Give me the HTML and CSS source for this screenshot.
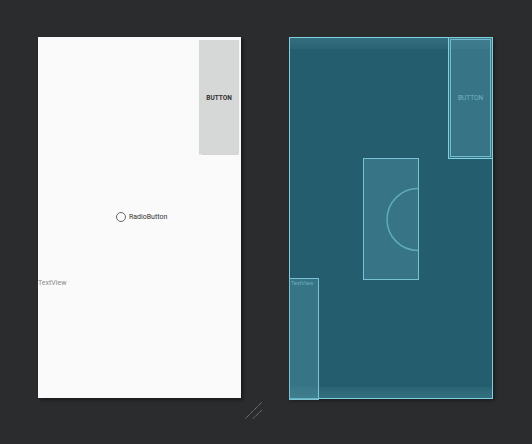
FILE: index.html
```html
<!DOCTYPE html>
<html>

<head>
    <meta charset="UTF-8" />
    <title>Layout Editor</title>
    <link rel="stylesheet" href="styles.css">
</head>

<body>
    <div class="stage">
        <!-- design surface -->
        <div class="screen design">
            <div class="btn">BUTTON</div>
            <div class="radio"><span class="dot"></span>RadioButton</div>
            <div class="text">TextView</div>
        </div>

        <!-- blueprint surface -->
        <div class="screen blueprint">
            <div class="bar top"></div>
            <div class="bar bottom"></div>
            <div class="bp bp-btn"><div class="inner">BUTTON</div></div>
            <div class="bp bp-radio">
                <svg width="54" height="120" viewBox="0 0 54 120">
                    <path d="M54 29.5 A31 31 0 0 0 54 91.5" fill="none" stroke="#5fa9ba" stroke-width="1.6" />
                </svg>
            </div>
            <div class="bp bp-text"><span>TextView</span></div>
        </div>
    </div>

    <svg class="grip" width="20" height="20" viewBox="0 0 20 20">
        <line x1="0.5" y1="17.5" x2="17" y2="1" stroke="#7d7e80" stroke-width="1" stroke-dasharray="1.4 0.5" />
        <line x1="8" y1="17.5" x2="17" y2="9" stroke="#7d7e80" stroke-width="1" stroke-dasharray="1.4 0.5" />
    </svg>
</body>

</html>
```

FILE: styles.css
```css
html, body {
    margin: 0;
    padding: 0;
    background-color: #2b2c2e;
    font-family: Roboto, "Liberation Sans", sans-serif;
}

body {
    width: 532px;
    height: 444px;
    position: relative;
    overflow: hidden;
}

.stage {
    display: flex;
    gap: 48px;
    padding: 37px 0 0 38px;
}

.screen {
    position: relative;
    box-sizing: border-box;
}

.design {
    width: 203px;
    height: 361px;
    background-color: #fafafa;
    box-shadow: 2px 2px 3px rgba(0, 0, 0, 0.45);
}

.btn {
    position: absolute;
    left: 161px;
    top: 3px;
    width: 40px;
    height: 114px;
    background-color: #d6d7d7;
    color: #333;
    font-size: 6.5px;
    font-weight: bold;
    display: flex;
    align-items: center;
    justify-content: center;
    padding-top: 1px;
    box-sizing: border-box;
    box-shadow: 0 0.5px 1px rgba(0, 0, 0, 0.15);
}

.radio {
    position: absolute;
    left: 78px;
    top: 175px;
    display: flex;
    align-items: center;
    gap: 3px;
    font-size: 7px;
    color: #333;
}

.dot {
    width: 8px;
    height: 8px;
    border: 1px solid #666;
    border-radius: 50%;
}

.text {
    position: absolute;
    left: 0;
    top: 242px;
    font-size: 7px;
    color: #8a8a8a;
}

.blueprint {
    width: 204px;
    height: 362px;
    background-color: #245d6d;
    border: 1px solid #7fcfe0;
    box-shadow: 2px 2px 3px rgba(0, 0, 0, 0.35);
}

.bar {
    position: absolute;
    left: 0;
    right: 0;
    height: 11px;
}

.bar.top {
    top: 0;
    background: linear-gradient(#336e7e, #2b6575);
}

.bar.bottom {
    bottom: 0;
    background: linear-gradient(#2a6474, #33707f);
}

.bp {
    position: absolute;
    box-sizing: border-box;
    border: 1px solid #78c4d5;
    background-color: rgba(80, 145, 162, 0.45);
}

.bp-btn {
    left: 158px;
    top: -1px;
    width: 45px;
    height: 122px;
    padding: 1px;
    border-color: #7fcfe0;
}

.bp-btn .inner {
    box-sizing: border-box;
    height: 100%;
    border: 1px solid #74bccd;
    display: flex;
    align-items: center;
    justify-content: center;
    color: #74b7c6;
    font-size: 6.5px;
}

.bp-radio {
    left: 73px;
    top: 120px;
    width: 56px;
    height: 122px;
}

.bp-radio svg {
    display: block;
}

.bp-text {
    left: -1px;
    top: 240px;
    width: 30px;
    height: 122px;
}

.bp-text span {
    display: block;
    padding: 0 0 0 1px;
    margin-top: 1px;
    font-size: 5.5px;
    color: #6aaebd;
}

.grip {
    position: absolute;
    left: 245px;
    top: 401px;
}
```
